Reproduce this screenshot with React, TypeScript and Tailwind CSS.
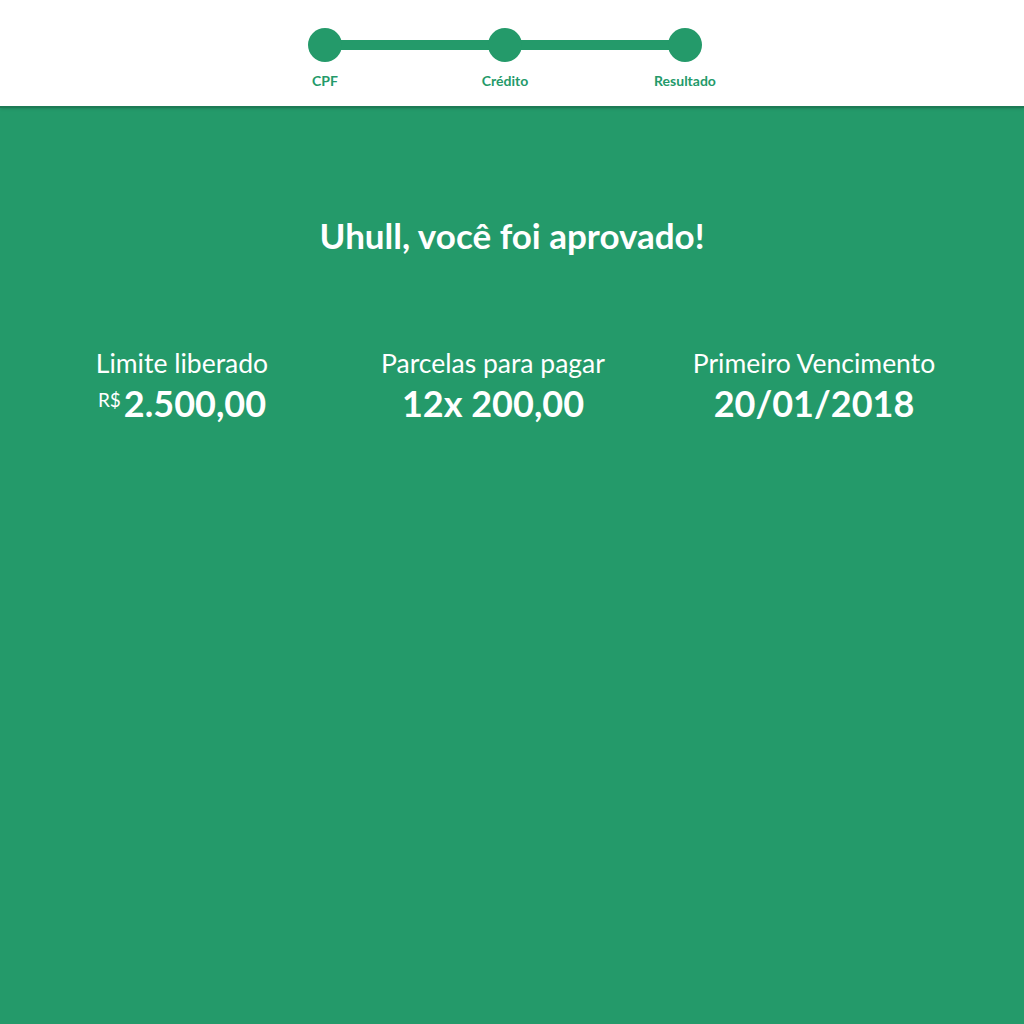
const STEPS = ['CPF', 'Crédito', 'Resultado']

const INFO = [
  { label: 'Limite liberado', value: '2.500,00', prefix: 'R$' },
  { label: 'Parcelas para pagar', value: '12x 200,00' },
  { label: 'Primeiro Vencimento', value: '20/01/2018' },
]

export default function App() {
  return (
    <div className="min-h-screen bg-[#249a6a] font-['Lato',sans-serif] text-white">
      <header className="h-[108px] bg-white border-b-2 border-[#1d7a55] shadow-sm flex justify-center pt-[28px]">
        <div className="relative w-[394px] mr-[14px]">
          <div className="absolute left-[17px] right-[17px] top-[12px] h-[10px] bg-[#249a6a]" />
          <div className="relative flex justify-between">
            {STEPS.map(s => (
              <div key={s} className="flex flex-col items-center w-[34px]">
                <div className="w-[34px] h-[34px] rounded-full bg-[#249a6a]" />
                <span className="mt-[8px] text-[14px] font-bold text-[#249a6a] whitespace-nowrap">{s}</span>
              </div>
            ))}
          </div>
        </div>
      </header>

      <h1 className="mt-[105px] text-center text-[35px] font-bold leading-[44px]">Uhull, você foi aprovado!</h1>

      <div className="mt-[90px] grid grid-cols-[316px_306px_336px] pl-6">
        {INFO.map(i => (
          <div key={i.label} className="flex flex-col items-center">
            <span className="text-[26.5px] leading-[32px]">{i.label}</span>
            <div className="mt-[3px] flex items-start">
              {i.prefix && <span className="text-[19px] mt-[4px] mr-[3px]">{i.prefix}</span>}
              <span className="text-[36px] font-bold leading-[42px]">{i.value}</span>
            </div>
          </div>
        ))}
      </div>
    </div>
  )
}
